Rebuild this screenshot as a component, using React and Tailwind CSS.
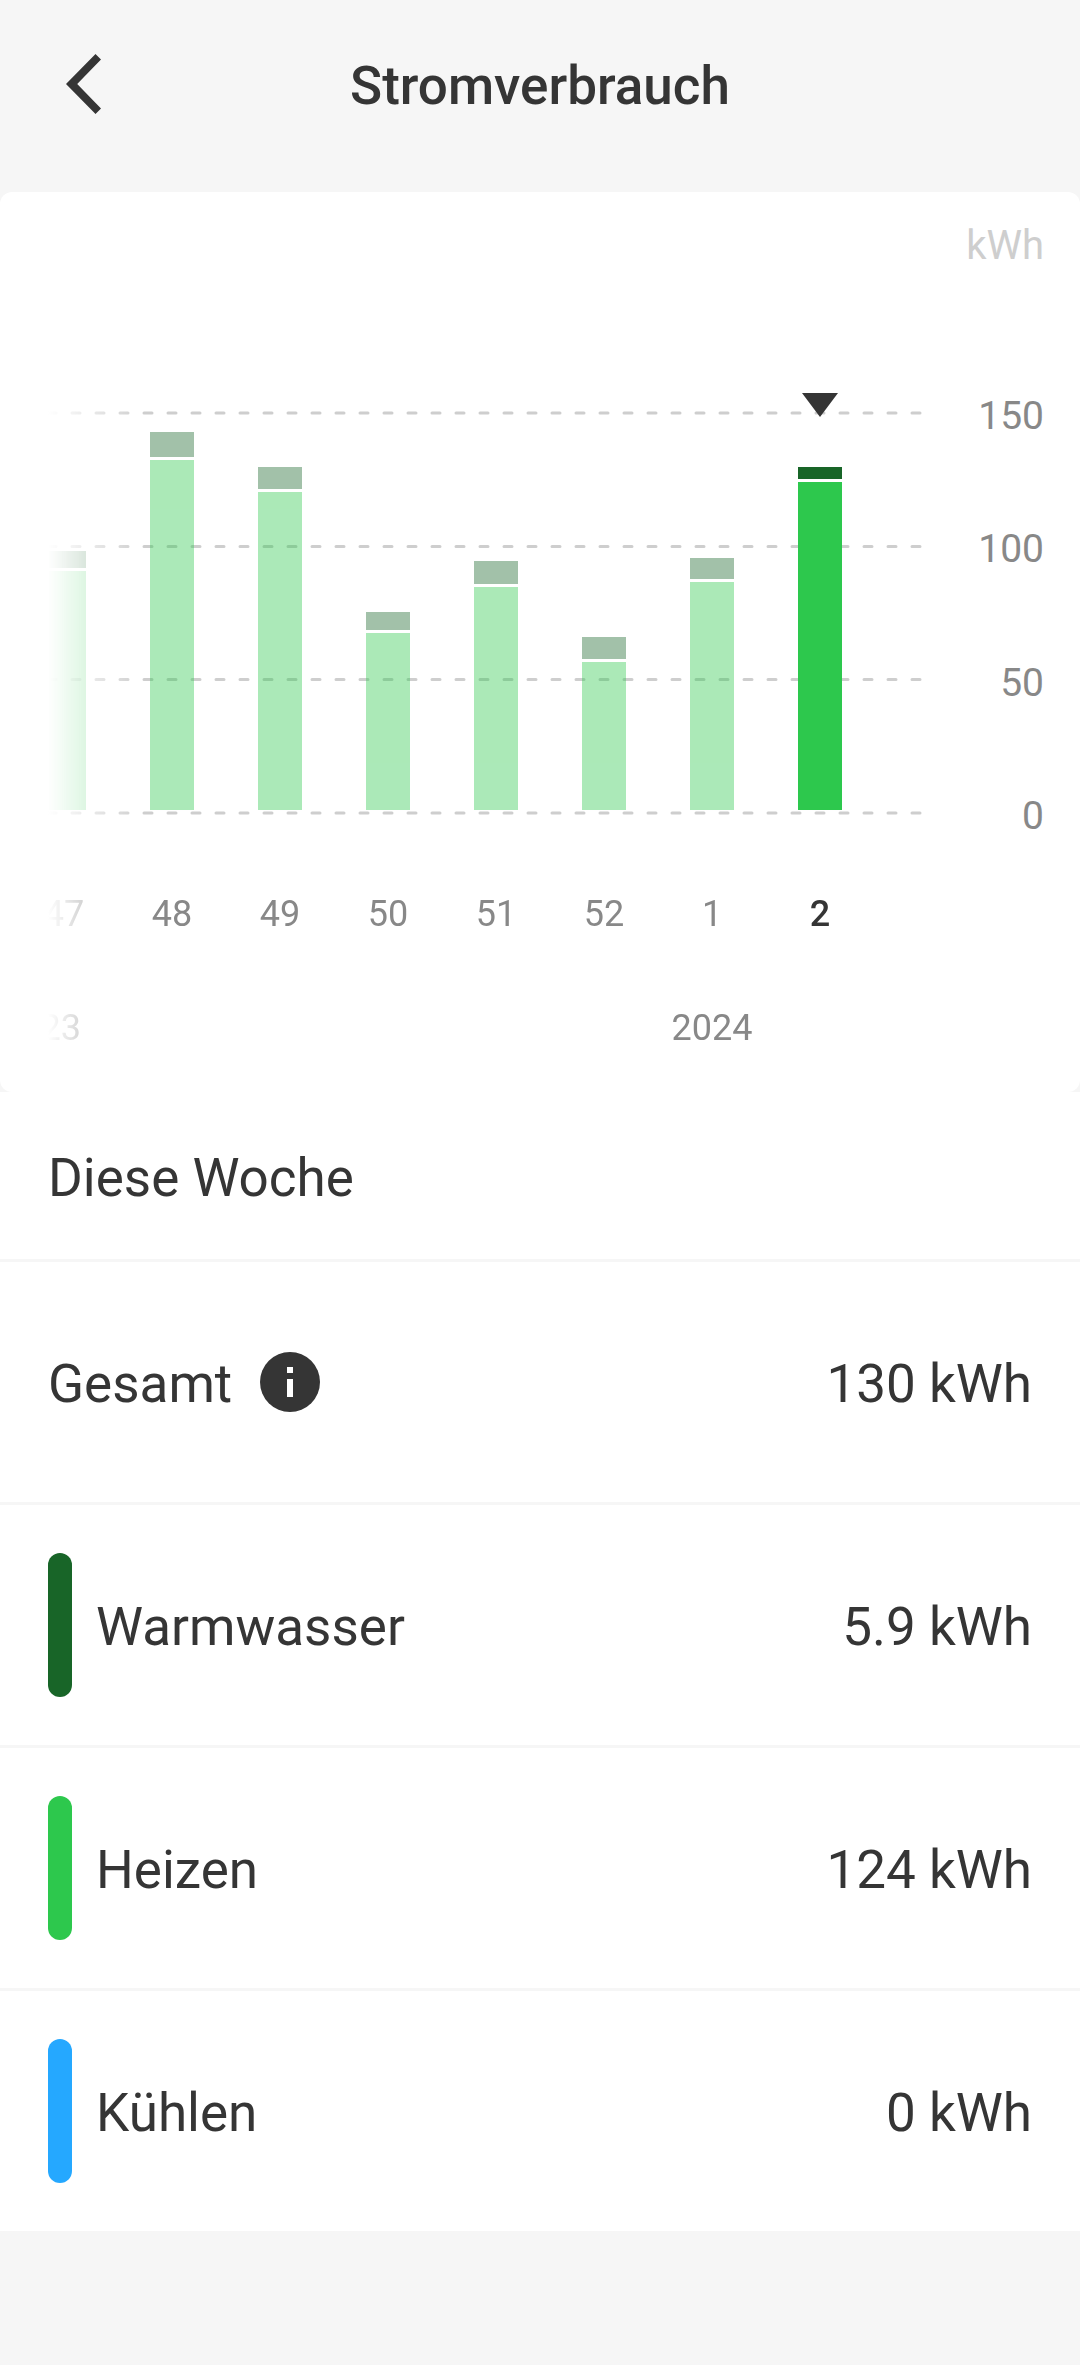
import React, { useState } from 'react';

// kWh per calendar week
const weeks = [
    { week: '47', heating: 90.8, water: 7.5, cooling: 0 },
    { week: '48', heating: 132.4, water: 10.5, cooling: 0 },
    { week: '49', heating: 120.2, water: 9.7, cooling: 0 },
    { week: '50', heating: 67.5, water: 7.9, cooling: 0 },
    { week: '51', heating: 84.9, water: 9.6, cooling: 0 },
    { week: '52', heating: 56.6, water: 9.4, cooling: 0 },
    { week: '1', heating: 86.8, water: 8.8, cooling: 0 },
    { week: '2', heating: 124, water: 5.9, cooling: 0 },
];

const axisLabels = ['150', '100', '50', '0'];
const gridLines = [20, 153.5, 286.5, 420];

// 50 kWh are 133px, 3px are left free below every segment
const segmentHeight = (value) => Math.max(0, (value * 8) / 3 - 3);

const formatValue = (value) => {
    if (value === 0) return '0 kWh';
    return (value < 10 ? value.toFixed(1) : value.toFixed(0)) + ' kWh';
};

function Header() {
    return (
        <header className="grid h-42 grid-cols-[1fr_auto_1fr] items-center px-12">
            <button type="button" aria-label="Zurück" className="justify-self-start">
                <svg className="block size-18" viewBox="0 0 72 72" fill="#353535">
                    <path d="M18 36 47.5 6 53 11.5 29.2 36 53 60.5 47.5 66z" />
                </svg>
            </button>
            <h1 className="pt-[5px] text-[53px] leading-[63px] font-medium">Stromverbrauch</h1>
        </header>
    );
}

function WeekColumn({ data, selected, onSelect }) {
    return (
        <button
            type="button"
            aria-pressed={selected}
            onClick={onSelect}
            className="flex w-27 shrink-0 flex-col items-center"
        >
            <span className="flex h-[417px] flex-col items-center">
                {selected && (
                    <svg className="block h-6 w-9" viewBox="0 0 36 24" fill="#353535">
                        <path d="M0 0h36L18 24z" />
                    </svg>
                )}
                <span className={selected ? 'mt-auto flex flex-col gap-[3px]' : 'mt-auto flex flex-col gap-[3px] opacity-40'}>
                    <span className="w-11 bg-[#186528]" style={{ height: segmentHeight(data.water) }} />
                    <span className="w-11 bg-[#2dc84d]" style={{ height: segmentHeight(data.heating) }} />
                </span>
            </span>
            <span className={selected ? 'mt-[83px] text-4xl leading-[42px] font-medium' : 'mt-[83px] text-4xl leading-[42px] text-[#888888]'}>
                {data.week}
            </span>
        </button>
    );
}

function Chart({ selected, onSelect }) {
    return (
        <section className="mt-6 rounded-xl bg-white pt-[31px] pr-9 pb-[43px] pl-12">
            <p className="text-right text-[40px] leading-[46px] text-[#cecece]">kWh</p>
            <div className="mt-31 flex">
                <div className="relative min-w-0 flex-1 overflow-hidden [mask-image:linear-gradient(to_right,transparent,black_96px)]">
                    <svg className="absolute inset-x-0 top-0 h-[424px] w-full" stroke="#cecece" strokeWidth="3" strokeLinecap="round" strokeDasharray="8 16">
                        {gridLines.map((y) => (
                            <line key={y} x1="0" x2="100%" y1={y} y2={y} />
                        ))}
                    </svg>
                    <div className="relative flex justify-end pr-12">
                        {weeks.map((data, index) => (
                            <WeekColumn
                                key={data.week}
                                data={data}
                                selected={index === selected}
                                onSelect={() => onSelect(index)}
                            />
                        ))}
                    </div>
                    <div className="mt-18 flex justify-end pr-12 text-4xl leading-[42px] text-[#888888]">
                        <span className="w-[658px] shrink-0">2023</span>
                        <span className="mr-27 w-27 shrink-0 text-center">2024</span>
                    </div>
                </div>
                <div className="flex h-[446px] w-[122px] flex-col justify-between text-right text-[39px] leading-[46px] text-[#888888]">
                    {axisLabels.map((label) => (
                        <span key={label}>{label}</span>
                    ))}
                </div>
            </div>
        </section>
    );
}

function InfoButton() {
    return (
        <button type="button" aria-label="Info" className="ml-7">
            <svg className="block size-15" viewBox="0 0 60 60">
                <circle cx="30" cy="30" r="30" fill="#353535" />
                <path d="M27 15h6v6h-6zM27 27h6v18h-6z" fill="#ffffff" />
            </svg>
        </button>
    );
}

function DetailRow({ label, value, color, children }) {
    return (
        <div className="flex h-[243px] items-center border-t-3 border-[#f6f6f6] px-12">
            {color && <span className={`mr-6 h-36 w-6 rounded-full ${color}`} />}
            <dt className="pt-[5px]">{label}</dt>
            {children}
            <dd className="ml-auto pt-[5px]">{formatValue(value)}</dd>
        </div>
    );
}

export default function App() {
    const [selected, setSelected] = useState(weeks.length - 1);
    const data = weeks[selected];
    const title = selected === weeks.length - 1 ? 'Diese Woche' : 'Woche ' + data.week;

    return (
        <div className="min-h-screen bg-[#f6f6f6] font-[Roboto,sans-serif] text-[#353535]">
            <Header />
            <main>
                <Chart selected={selected} onSelect={setSelected} />
                <section className="bg-white text-[53px] leading-[63px]">
                    <h2 className="px-12 pt-[55px] pb-[49px]">{title}</h2>
                    <dl>
                        <DetailRow label="Gesamt" value={data.heating + data.water + data.cooling}>
                            <InfoButton />
                        </DetailRow>
                        <DetailRow label="Warmwasser" value={data.water} color="bg-[#186528]" />
                        <DetailRow label="Heizen" value={data.heating} color="bg-[#2dc84d]" />
                        <DetailRow label="Kühlen" value={data.cooling} color="bg-[#25a8ff]" />
                    </dl>
                </section>
            </main>
        </div>
    );
}
